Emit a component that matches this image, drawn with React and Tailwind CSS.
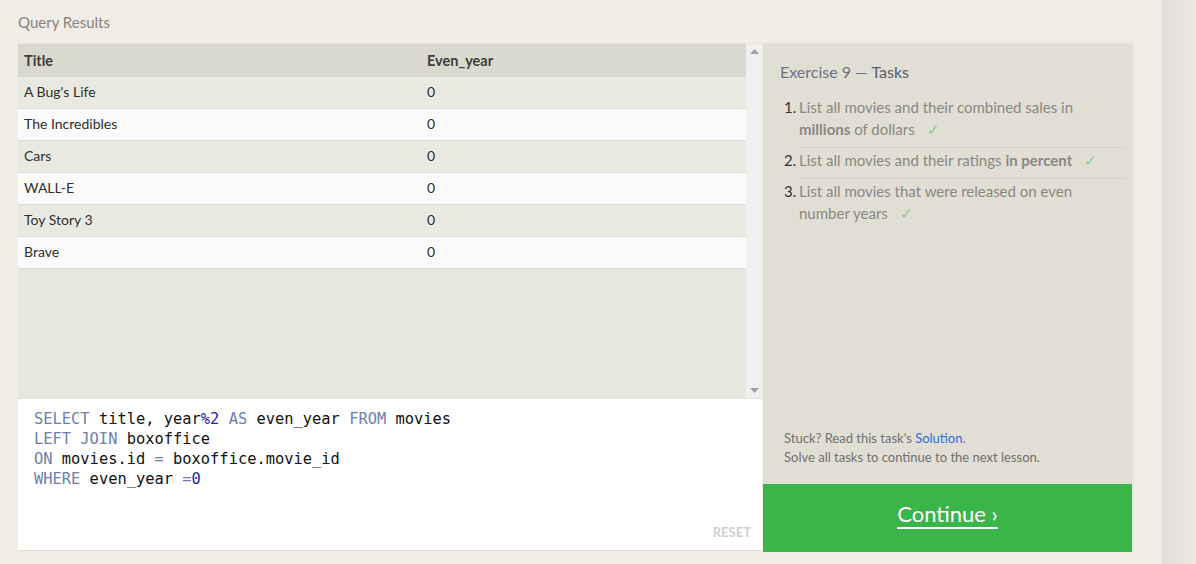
import React from 'react';

const rows = [
  ["A Bug's Life", '0'],
  ['The Incredibles', '0'],
  ['Cars', '0'],
  ['WALL-E', '0'],
  ['Toy Story 3', '0'],
  ['Brave', '0'],
];

const tasks = [
  [<>List all movies and their combined sales in <b className="font-bold">millions</b> of dollars</>],
  [<>List all movies and their ratings <b className="font-bold">in percent</b></>],
  [<>List all movies that were released on even number years</>],
];

function Check() {
  return <span className="ml-[12px] text-[15px] leading-[20px] text-[#86c98f]">✓</span>;
}

function Kw({ children }) {
  return <span className="text-[#6c7fae]">{children}</span>;
}

function Num({ children }) {
  return <span className="text-[#2323b8]">{children}</span>;
}

export default function App() {
  return (
    <div className="flex h-[564px] w-[1196px] overflow-hidden bg-[#f0ede6] font-['Lato','Open_Sans',sans-serif]">
      <div className="w-[1162px] pl-[18px] pt-[13px]">
        <div className="text-[15px] leading-[18px] text-[#87827c]">Query Results</div>
        <div className="mt-[12px] flex">
          {/* left: results + editor */}
          <div className="w-[744px]">
            <div className="flex h-[355px] border-t border-[#e6e4dc]">
              <div className="w-[728px] bg-[#e9e8e0]">
                <div className="flex h-[33px] items-center bg-[#dad9cd] text-[14.5px] font-bold text-[#3d3d3d]">
                  <div className="w-[403px] pl-[6px]">Title</div>
                  <div className="pl-[6px]">Even_year</div>
                </div>
                {rows.map((r, i) => (
                  <div
                    key={i}
                    className={
                      'flex h-[32px] items-center border-b border-[#dcdbd3] pb-[2px] text-[14px] text-[#2e2e2e] ' +
                      (i % 2 === 0 ? 'bg-[#eae9e1]' : 'bg-[#fafafa]')
                    }
                  >
                    <div className="w-[403px] pl-[6px]">{r[0]}</div>
                    <div className="pl-[6px]">{r[1]}</div>
                  </div>
                ))}
              </div>
              <div className="flex w-[16px] flex-col items-center justify-between bg-[#f0f0f0] py-[5px]">
                <svg width="9" height="5" viewBox="0 0 9 5"><path d="M4.5 0L9 5H0z" fill="#a3a3a3" /></svg>
                <svg width="9" height="5" viewBox="0 0 9 5"><path d="M0 0h9L4.5 5z" fill="#a3a3a3" /></svg>
              </div>
            </div>
            <div className="relative h-[153px] border-t border-[#e2e0d8] border-b border-b-[#e2e0d8] bg-white pl-[16px] pt-[10px] font-['DejaVu_Sans_Mono',monospace] text-[15.4px] leading-[20px] text-[#111]">
              <div>
                <Kw>SELECT</Kw> title, year<Num>%2</Num> <Kw>AS</Kw> even_year <Kw>FROM</Kw> movies
              </div>
              <div>
                <Kw>LEFT JOIN</Kw> boxoffice
              </div>
              <div>
                <Kw>ON</Kw> movies.id <Kw>=</Kw> boxoffice.movie_id
              </div>
              <div>
                <Kw>WHERE</Kw> even_year <Kw>=</Kw><Num>0</Num>
              </div>
              <div className="absolute bottom-[8px] right-[11px] font-['Lato',sans-serif] text-[13px] font-bold text-[#cfcfcf]">
                RESET
              </div>
            </div>
          </div>
          {/* right: tasks */}
          <div className="ml-[1px] flex h-[509px] w-[371px] flex-col border-t border-r-2 border-[#e7e5dc] bg-[#e1dfd4]">
            <div className="flex-1 pl-[17px] pr-[6px] pt-[18px]">
              <div className="text-[16px] leading-[20px] text-[#6b7283]">
                Exercise 9 — <span className="text-[#555b6b]">Tasks</span>
              </div>
              <ol className="mt-[14px]">
                {tasks.map((t, i) => (
                  <li key={i} className="flex text-[15px] leading-[22px]">
                    <span className={'w-[19px] shrink-0 pl-[4px] text-[#333] ' + (i > 0 ? 'pt-[1px]' : '')}>{i + 1}.</span>
                    <div
                      className={
                        'flex-1 pr-[26px] text-[#8a8884] ' +
                        (i < 2 ? 'border-b border-[#d3d1c6] pb-[7px] ' : '') +
                        (i > 0 ? 'pt-[1px]' : '')
                      }
                    >
                      {t[0]}
                      <Check />
                    </div>
                  </li>
                ))}
              </ol>
            </div>
            <div className="pb-[17px] pl-[21px] text-[13px] leading-[19px] text-[#707070]">
              <div>
                Stuck? Read this task's <span className="text-[#2d6ae3]">Solution</span>.
              </div>
              <div>Solve all tasks to continue to the next lesson.</div>
            </div>
            <div className="flex h-[68px] items-center justify-center bg-[#3ab54a] pb-[9px] text-[22px] text-white">
              <span className="underline decoration-2 underline-offset-[5px]">Continue ›</span>
            </div>
          </div>
        </div>
      </div>
      <div className="flex-1 bg-gradient-to-r from-[#e1dddb] to-[#ebe8e5]" />
    </div>
  );
}
